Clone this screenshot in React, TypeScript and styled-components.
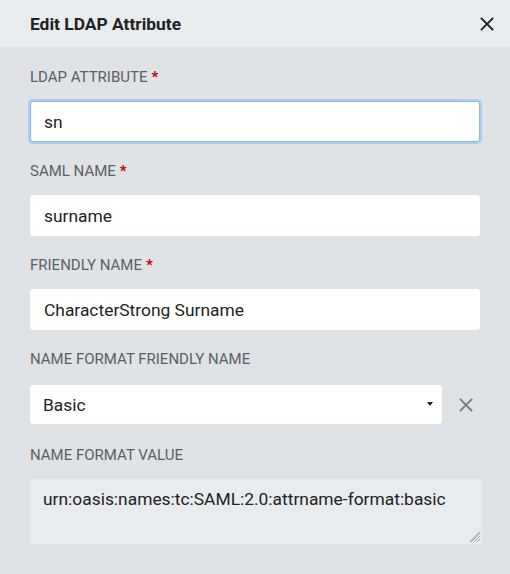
import React, { useState } from "react";
import styled, { createGlobalStyle } from "styled-components";

const GlobalStyle = createGlobalStyle`
  html, body {
    margin: 0;
    padding: 0;
    background: #dfe3e6;
    font-family: Roboto, "Liberation Sans", sans-serif;
  }
  * {
    box-sizing: border-box;
  }
`;

const Dialog = styled.div`
  width: 510px;
  min-height: 574px;
  background: #dfe3e6;
  display: flex;
  flex-direction: column;
`;

const Header = styled.div`
  height: 47px;
  background: #e9ecef;
  display: flex;
  align-items: center;
  justify-content: space-between;
  padding: 0 16px 0 30px;
`;

const Title = styled.h1`
  margin: 0;
  font-size: 17.4px;
  font-weight: 700;
  color: #222;
`;

const IconButton = styled.button<{ $muted?: boolean }>`
  border: none;
  background: transparent;
  padding: 0;
  width: 14px;
  height: 14px;
  display: flex;
  align-items: center;
  justify-content: center;
  cursor: pointer;
  color: ${(p) => (p.$muted ? "#767a7d" : "#222")};
`;

const Body = styled.form`
  display: flex;
  flex-direction: column;
  padding: 21px 30px 0 30px;
`;

const Field = styled.div`
  display: flex;
  flex-direction: column;
  gap: 15px;
  margin-bottom: 20px;
`;

const Label = styled.label`
  font-size: 15px;
  color: #5b6063;
  text-transform: uppercase;
  line-height: 18px;
`;

const Required = styled.span`
  color: #c40000;
  font-weight: 700;
  margin-left: 4px;
`;

const TextInput = styled.input<{ $focused?: boolean }>`
  height: 41px;
  width: 100%;
  border: 1px solid ${(p) => (p.$focused ? "#8fb8ea" : "transparent")};
  box-shadow: ${(p) => (p.$focused ? "0 0 0 2px #a9cdf5" : "none")};
  border-radius: 3px;
  background: #fff;
  padding: 0 13px;
  font-family: inherit;
  font-size: 17.4px;
  color: #222;
  outline: none;
`;

const SelectRow = styled.div`
  height: 43px;
  display: flex;
  align-items: center;
  gap: 17px;
`;

const SelectBox = styled.div`
  position: relative;
  flex: 0 0 412px;
  height: 39px;
  background: #fff;
  border-radius: 3px;
  display: flex;
  align-items: center;
  padding: 0 13px;
  font-size: 17.4px;
  color: #222;
`;

const Caret = styled.span`
  position: absolute;
  right: 9px;
  top: 17px;
  width: 0;
  height: 0;
  border-left: 3.5px solid transparent;
  border-right: 3.5px solid transparent;
  border-top: 4px solid #222;
`;

const AreaWrap = styled.div`
  position: relative;
  width: 452px;
  height: 65px;
`;

const TextArea = styled.textarea`
  width: 100%;
  height: 100%;
  display: block;
  border: none;
  border-radius: 3px;
  background: #e9ecef;
  padding: 10px 13px;
  font-family: inherit;
  font-size: 17.4px;
  color: #222;
  resize: none;
  outline: none;
`;

const Grip = styled.svg`
  position: absolute;
  right: 1px;
  bottom: 1px;
  pointer-events: none;
`;

const CloseIcon = () => (
  <svg width={14} height={14} viewBox="0 0 14 14" fill="none">
    <path
      d="M1.5 1.5 L12.5 12.5 M12.5 1.5 L1.5 12.5"
      stroke="currentColor"
      strokeWidth={1.8}
      strokeLinecap="square"
    />
  </svg>
);

const App: React.FC = () => {
  const [ldap, setLdap] = useState("sn");
  const [saml, setSaml] = useState("surname");
  const [friendly, setFriendly] = useState("CharacterStrong Surname");
  const [value, setValue] = useState(
    "urn:oasis:names:tc:SAML:2.0:attrname-format:basic"
  );

  return (
    <Dialog>
      <GlobalStyle />
      <Header>
        <Title>Edit LDAP Attribute</Title>
        <IconButton type="button" aria-label="Close">
          <CloseIcon />
        </IconButton>
      </Header>

      <Body onSubmit={(e) => e.preventDefault()}>
        <Field>
          <Label htmlFor="ldap">
            LDAP Attribute<Required>*</Required>
          </Label>
          <TextInput
            id="ldap"
            $focused
            value={ldap}
            onChange={(e) => setLdap(e.target.value)}
          />
        </Field>

        <Field>
          <Label htmlFor="saml">
            SAML Name<Required>*</Required>
          </Label>
          <TextInput
            id="saml"
            value={saml}
            onChange={(e) => setSaml(e.target.value)}
          />
        </Field>

        <Field>
          <Label htmlFor="friendly">
            Friendly Name<Required>*</Required>
          </Label>
          <TextInput
            id="friendly"
            value={friendly}
            onChange={(e) => setFriendly(e.target.value)}
          />
        </Field>

        <Field>
          <Label>Name Format Friendly Name</Label>
          <SelectRow>
            <SelectBox>
              Basic
              <Caret />
            </SelectBox>
            <IconButton type="button" $muted aria-label="Clear">
              <CloseIcon />
            </IconButton>
          </SelectRow>
        </Field>

        <Field>
          <Label htmlFor="format">Name Format Value</Label>
          <AreaWrap>
            <TextArea
              id="format"
              value={value}
              onChange={(e) => setValue(e.target.value)}
            />
            <Grip width="12" height="12" viewBox="0 0 12 12">
              <path
                d="M11 2 L2 11 M11 5 L5 11 M11 8 L8 11 M11 0.5 L0.5 11"
                stroke="#8a8e91"
                strokeWidth="0.8"
              />
            </Grip>
          </AreaWrap>
        </Field>
      </Body>
    </Dialog>
  );
};

export default App;
